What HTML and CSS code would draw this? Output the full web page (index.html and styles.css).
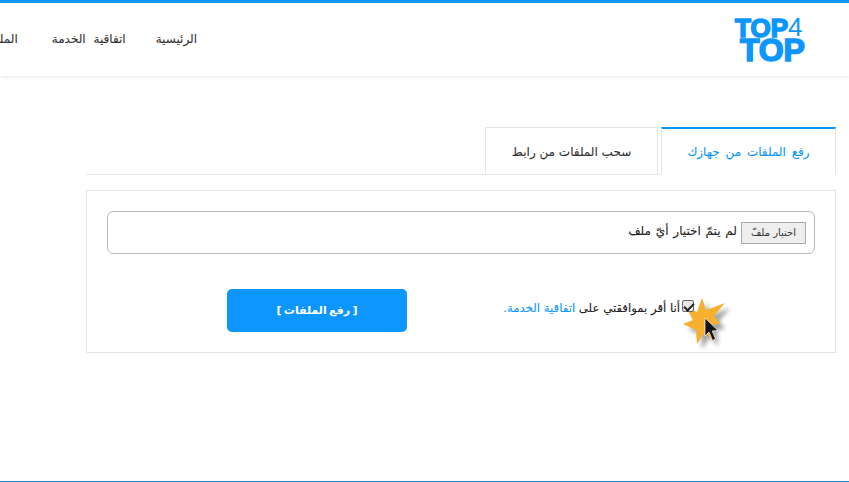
FILE: index.html
```html
<!DOCTYPE html>
<html lang="ar" dir="rtl">
<head>
<meta charset="utf-8">
<title>TOP4TOP</title>
<link rel="stylesheet" href="styles.css">
</head>
<body>
<header class="site-header">
  <a class="logo" href="#" dir="ltr">
    <span class="logo-line-one">TOP<span class="logo-four">4</span></span>
    <span class="logo-line-two">TOP</span>
  </a>
  <nav class="main-nav">
    <a href="#">الرئيسية</a>
    <a href="#">اتفاقية الخدمة</a>
    <a class="nav-files" href="#">الملفات</a>
  </nav>
</header>
<main class="content">
  <div class="tabs">
    <a class="tab tab-active" href="#">رفع الملفات من جهازك</a>
    <a class="tab" href="#">سحب الملفات من رابط</a>
  </div>
  <form class="panel">
    <div class="file-box">
      <span class="file-button">اختيار ملفّ</span>
      <span class="file-label">لم يتمّ اختيار أيّ ملف</span>
    </div>
    <div class="actions">
      <label class="agree">
        <input class="agree-check" type="checkbox" checked>
        <span class="agree-text">أنا أقر بموافقتي على <a href="#">اتفاقية الخدمة.</a></span>
        <svg class="burst" viewBox="0 0 60 60" width="60" height="60" aria-hidden="true">
          <defs>
            <filter id="soft" x="-30%" y="-30%" width="160%" height="160%"><feGaussianBlur stdDeviation="2"/></filter>
          </defs>
          <polygon transform="translate(5 5)" fill="#666" opacity=".6" filter="url(#soft)" points="27,7 31,19 50,12 39,25 45,33 37,34 38,50 30,41 22,53 21,39 8,33 18,29 11,16 22,21"/>
          <polygon fill="#f6b02e" points="27,7 31,19 50,12 39,25 45,33 37,34 38,50 30,41 22,53 21,39 8,33 18,29 11,16 22,21"/>
          <path d="M30 27 L30 45 L34 41 L37.5 49.5 L40.5 48 L37.2 40 L43 39.5 Z" fill="#111" stroke="#fff" stroke-width=".7"/>
        </svg>
      </label>
      <button class="submit" type="button">[ رفع الملفات ]</button>
    </div>
  </form>
</main>
<footer class="site-footer"></footer>
</body>
</html>
```
FILE: styles.css
```css
* { box-sizing: border-box; }
html, body { height: 100%; }
body {
  margin: 0;
  display: flex;
  flex-direction: column;
  overflow: hidden;
  background: #fff;
  color: #333;
  font-family: "DejaVu Sans", sans-serif;
  font-size: 12px;
}
a { text-decoration: none; color: inherit; }

.site-header {
  flex: none;
  height: 76px;
  border-top: 3px solid #0e96ff;
  box-shadow: 0 1px 4px rgba(0,0,0,.1);
  display: flex;
  align-items: center;
  padding-right: 43px;
  overflow: hidden;
}
.logo {
  flex: none;
  width: 72px;
  display: flex;
  flex-direction: column;
  color: #0e96ff;
  font-family: "Liberation Sans", sans-serif;
  font-weight: 700;
  -webkit-text-stroke: 1.6px #0e96ff;
}
.logo-line-one { font-size: 26px; line-height: 21px; white-space: nowrap; margin-left: 1px; }
.logo-four { font-size: 26px; font-weight: 400; -webkit-text-stroke: 0; vertical-align: 1px; }
.logo-line-two { font-size: 32px; line-height: 23px; margin-left: 6px; letter-spacing: -.2px; }
.main-nav {
  flex: none;
  display: flex;
  gap: 30px;
  margin-right: 537px;
  padding-bottom: 1px;
  color: #333;
  white-space: nowrap;
  word-spacing: 4px;
  -webkit-text-stroke: .1px #333;
}
.nav-files { margin-right: 4px; }

.content {
  flex: 1;
  padding: 51px 13px 0 86px;
}
.tabs {
  display: flex;
  gap: 3px;
  height: 48px;
  border-bottom: 1px solid #e5e5e5;
}
.tab {
  width: 173px;
  height: 48px;
  padding-top: 1px;
  display: flex;
  align-items: center;
  justify-content: center;
  border: 1px solid #e5e5e5;
  color: #333;
  font-size: 12px;
  -webkit-text-stroke: .1px currentColor;
}
.tab-active {
  width: 175px;
  border-top: 2px solid #0e96ff;
  border-bottom-color: #fff;
  color: #0e96ff;
  word-spacing: 2px;
}
.panel {
  margin-top: 15px;
  height: 163px;
  border: 1px solid #e5e5e5;
  padding: 20px;
}
.file-box {
  height: 43px;
  border: 1px solid #bbb;
  border-radius: 6px;
  display: flex;
  align-items: center;
  gap: 4px;
  padding: 0 8px;
  color: #222;
}
.file-button {
  width: 65px;
  height: 22px;
  display: flex;
  align-items: center;
  justify-content: center;
  background: #eee;
  border: 1px solid #aaa;
  font-size: 10px;
  color: #333;
}
.file-label {
  padding-bottom: 3px;
  word-spacing: 1px;
  -webkit-text-stroke: .1px #222;
}
.actions {
  margin-top: 35px;
  display: flex;
  align-items: flex-start;
  justify-content: space-between;
  padding: 0 121px 0 120px;
}
.agree {
  position: relative;
  display: flex;
  align-items: center;
  gap: 2px;
  font-size: 11.7px;
  color: #222;
  white-space: nowrap;
  margin-top: 8px;
  -webkit-text-stroke: .1px currentColor;
}
.agree a { color: #0e96ff; }
.agree-text { padding-top: 4px; }
.agree-check {
  appearance: none;
  position: relative;
  z-index: 1;
  margin: 0;
  width: 12px;
  height: 12px;
  background: #e6e6e6;
  border: 1px solid #666;
  border-radius: 2px;
}
.agree-check::after {
  content: "";
  position: absolute;
  left: 3px;
  top: 0;
  width: 4px;
  height: 8px;
  border: solid #222;
  border-width: 0 2px 2px 0;
  transform: rotate(45deg);
}
.burst {
  position: absolute;
  top: -6px;
  right: -41px;
}
.submit {
  width: 180px;
  height: 43px;
  border: 0;
  border-radius: 5px;
  background: #0e96ff;
  color: #fff;
  font-family: inherit;
  font-size: 11px;
  font-weight: 700;
  word-spacing: -1.5px;
}
.site-footer {
  flex: none;
  height: 1px;
  background: #2a8ac8;
}
```
